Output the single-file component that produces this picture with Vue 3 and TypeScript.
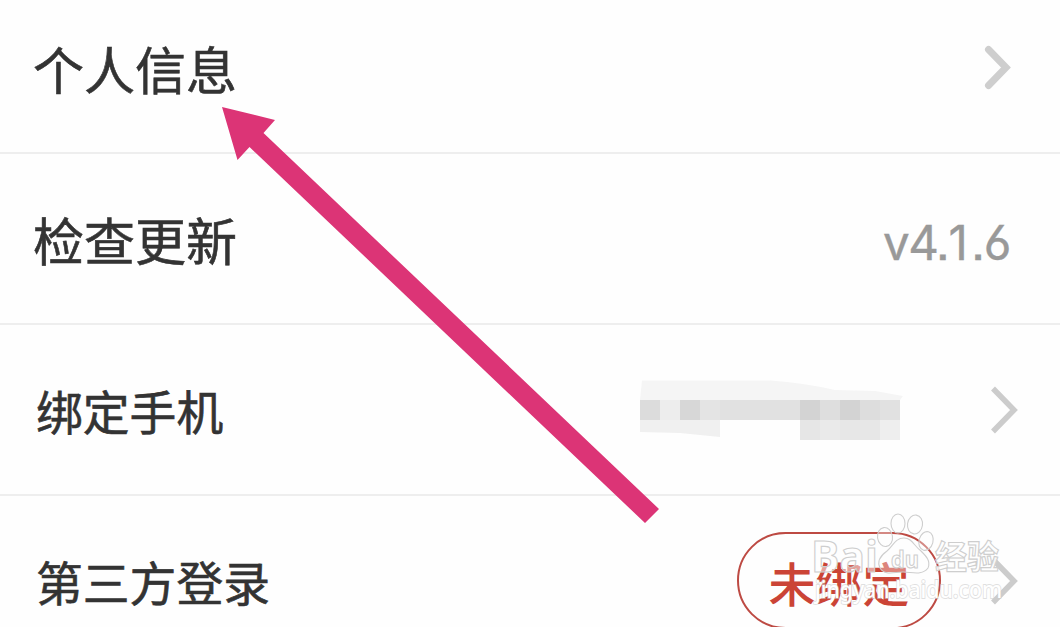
<script setup lang="ts">
interface Tile { x: number; y: number; w: number; h: number; c: string }

const tiles: Tile[] = [
  { x: 20, y: 40, w: 20, h: 20, c: '#dcdcdc' },
  { x: 40, y: 40, w: 20, h: 20, c: '#ededed' },
  { x: 60, y: 40, w: 20, h: 20, c: '#d7d7d7' },
  { x: 80, y: 40, w: 20, h: 20, c: '#e4e4e4' },
  { x: 100, y: 40, w: 80, h: 20, c: '#e1e1e1' },
  { x: 180, y: 40, w: 20, h: 20, c: '#d3d3d3' },
  { x: 200, y: 40, w: 20, h: 20, c: '#dedede' },
  { x: 220, y: 40, w: 20, h: 20, c: '#d3d3d3' },
  { x: 240, y: 40, w: 20, h: 20, c: '#dddddd' },
  { x: 260, y: 40, w: 20, h: 20, c: '#e1e1e1' },
  { x: 180, y: 60, w: 20, h: 20, c: '#e6e6e6' },
  { x: 200, y: 60, w: 20, h: 20, c: '#eaeaea' },
  { x: 220, y: 60, w: 40, h: 20, c: '#e7e7e7' },
  { x: 260, y: 60, w: 20, h: 20, c: '#eeeeee' },
]
</script>

<template>
  <main class="page">
    <section class="row">
      <span class="label large">个人信息</span>
      <svg class="chevron first" width="32" height="52" viewBox="0 0 32 52">
        <path d="M6.500 7.500 24 25.500 6.500 43.500" stroke-width="7" stroke-linecap="round" />
      </svg>
    </section>
    <section class="row">
      <span class="label large">检查更新</span>
      <span class="version">v4.<span class="one">1</span>.6</span>
    </section>
    <section class="row">
      <span class="label">绑定手机</span>
      <svg class="mosaic" width="340" height="100" viewBox="0 0 340 100">
        <path d="M20 40 22 20.500H150Q185 23 215 30L255 31 283 36 280 40Z" fill="#f5f5f5" />
        <path d="M20 60H100V77L60 73 20 72Z" fill="#f0f0f0" />
        <rect v-for="(t, i) in tiles" :key="i" :x="t.x" :y="t.y" :width="t.w" :height="t.h" :fill="t.c" />
      </svg>
      <svg class="chevron" width="32" height="52" viewBox="0 0 32 52">
        <path d="M4 4.500 25 26 4 47.500" stroke-width="5.500" />
      </svg>
    </section>
    <section class="row">
      <span class="label">第三方登录</span>
      <span class="badge">未绑定</span>
      <svg class="chevron" width="32" height="52" viewBox="0 0 32 52">
        <path d="M4 4.500 25 26 4 47.500" stroke-width="5.500" />
      </svg>
    </section>

    <svg class="overlay" width="1060" height="627" viewBox="0 0 1060 627">
      <path d="M222 107 275 120 263.500 133 659 509 645 523 249.500 147 237.500 160Z" fill="#dc3476" />
      <g class="mark">
        <text class="brand" x="811" y="572" textLength="67" lengthAdjust="spacingAndGlyphs">Bai</text>
        <ellipse cx="885" cy="537" rx="7.500" ry="9.500" transform="rotate(-8 885 537)" />
        <ellipse cx="898" cy="523.500" rx="7" ry="9.500" />
        <ellipse cx="915" cy="524.500" rx="7.500" ry="9.500" transform="rotate(8 915 524.500)" />
        <ellipse cx="926" cy="541" rx="7" ry="9.500" transform="rotate(15 926 541)" />
        <path d="M904 538C895 538 893 546 887 551C880 556 877 562 880 568C885 576 894 572 903 572C912 572 922 576 928 568C931 561 926 556 921 551C914 546 912 538 904 538Z" />
        <text class="du" x="891" y="568" textLength="28" lengthAdjust="spacingAndGlyphs">du</text>
        <text class="cn" x="935" y="569" textLength="64" lengthAdjust="spacingAndGlyphs">经验</text>
        <text class="site" x="815" y="598" textLength="187" lengthAdjust="spacingAndGlyphs">jingyan.baidu.com</text>
      </g>
    </svg>
  </main>
</template>

<style>
body { margin: 0; background: #fefefe; }
</style>

<style scoped>
.page {
  position: relative;
  box-sizing: border-box;
  width: 1060px;
  height: 627px;
  overflow: hidden;
  background: #fefefe;
  font-family: "Noto Sans CJK SC", sans-serif;
}
.row {
  box-sizing: border-box;
  height: 171px;
  padding: 0 37px 0 36px;
  display: flex;
  align-items: center;
  border-bottom: 2px solid #eeeeee;
}
.row:first-child { margin-top: -17px; }
.label {
  margin-right: auto;
  padding-top: 1px;
  font-size: 46.800px;
  line-height: 60px;
  color: #333;
  -webkit-text-stroke: 0.6px #333;
  white-space: nowrap;
}
.large { font-size: 51px; margin-left: -3px; }
.chevron { flex: none; fill: none; stroke: #cccccc; margin-right: 2px; }
.first { margin-right: 9px; stroke: #cecece; }
.version {
  margin-right: 13px;
  padding-top: 9px;
  font: 400 47.500px/60px "Inter", sans-serif;
  font-feature-settings: "cv03", "ss07";
  letter-spacing: -1.3px;
  color: #999;
  -webkit-text-stroke: 0.4px #999;
}
.one { letter-spacing: 3.500px; }
.mosaic { margin-right: 29px; }
.badge {
  box-sizing: border-box;
  width: 204px;
  height: 97px;
  margin-right: 48px;
  border: 2px solid #bd4a43;
  border-radius: 49px;
  font-size: 47px;
  font-weight: 500;
  line-height: 95px;
  text-align: center;
  color: #cb4436;
}
.overlay { position: absolute; left: 0; top: 0; }
.mark { fill: rgba(255, 255, 255, 0.35); stroke: #cecece; stroke-width: 1.1; }
.brand { font: 700 43px "Open Sans", sans-serif; fill: rgba(255, 255, 255, 0.5); }
.du { font: 700 23px "Open Sans", sans-serif; }
.cn { font: 700 33px "Noto Sans CJK SC", sans-serif; fill: rgba(255, 255, 255, 0.85); }
.site { font: 500 23px "Noto Sans", sans-serif; stroke: rgba(205, 205, 205, 0.6); stroke-width: 1.8; paint-order: stroke; fill: #fff; }
</style>
